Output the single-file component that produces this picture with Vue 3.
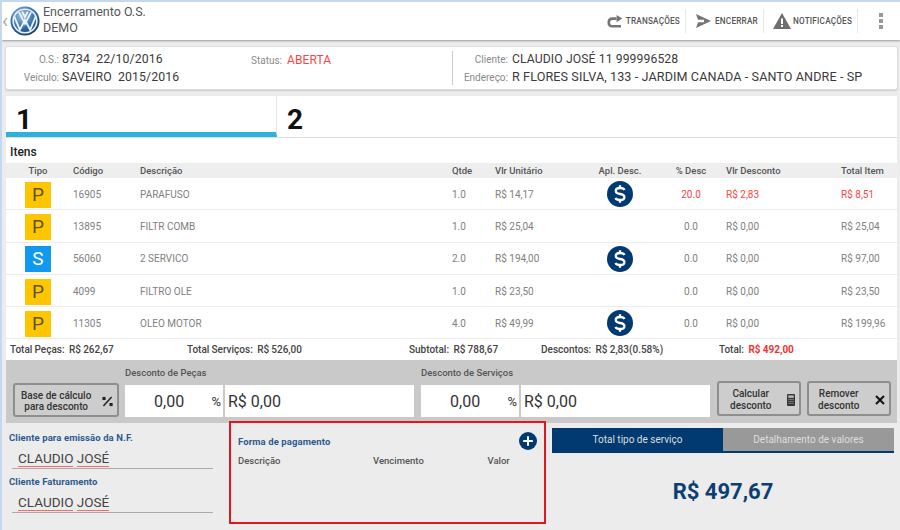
<script setup>
const cols = ['Tipo', 'Código', 'Descrição', 'Qtde', 'Vlr Unitário', 'Apl. Desc.', '% Desc', 'Vlr Desconto', 'Total Item']
const rows = [
  { t: 'P', c: '16905', d: 'PARAFUSO', q: '1.0', u: 'R$ 14,17', a: true, p: '20.0', v: 'R$ 2,83', total: 'R$ 8,51', red: true },
  { t: 'P', c: '13895', d: 'FILTR COMB', q: '1.0', u: 'R$ 25,04', a: false, p: '0.0', v: 'R$ 0,00', total: 'R$ 25,04' },
  { t: 'S', c: '56060', d: '2 SERVICO', q: '2.0', u: 'R$ 194,00', a: true, p: '0.0', v: 'R$ 0,00', total: 'R$ 97,00' },
  { t: 'P', c: '4099', d: 'FILTRO OLE', q: '1.0', u: 'R$ 23,50', a: false, p: '0.0', v: 'R$ 0,00', total: 'R$ 23,50' },
  { t: 'P', c: '11305', d: 'OLEO MOTOR', q: '4.0', u: 'R$ 49,99', a: true, p: '0.0', v: 'R$ 0,00', total: 'R$ 199,96' }
]
</script>

<template>
  <div class="page">
    <header class="topbar">
      <div class="brand">
        <span class="back">‹</span>
        <svg class="logo" viewBox="0 0 32 32" width="30" height="30">
          <defs>
            <radialGradient id="vwg" cx="40%" cy="30%" r="75%">
              <stop offset="0" stop-color="#9cc4e4" />
              <stop offset="0.6" stop-color="#2f6ca8" />
              <stop offset="1" stop-color="#123a66" />
            </radialGradient>
          </defs>
          <circle cx="16" cy="16" r="15.5" fill="url(#vwg)" />
          <circle cx="16" cy="16" r="12.6" fill="none" stroke="#e8eef4" stroke-width="1.7" />
          <path d="M9.5 6.5 L16 19 L22.5 6.5 M13 6 L16 12 L19 6 M4.5 11 L10.5 25.5 L16 15 L21.5 25.5 L27.5 11" fill="none" stroke="#eef3f8" stroke-width="2" />
        </svg>
        <div class="title">
          <div>Encerramento O.S.</div>
          <div>DEMO</div>
        </div>
      </div>
      <nav class="actions">
        <div class="action a1">
          <svg viewBox="0 0 18 15" width="18" height="15"><path d="M11 4.2 H6.5 Q2 4.2 2 8.6 Q2 13 6.5 13 H16" fill="none" stroke="#757575" stroke-width="3" /><path d="M11 0 L17.5 4.2 L11 8.4 Z" fill="#757575" /></svg>
          <span>TRANSAÇÕES</span>
        </div>
        <div class="action a2">
          <svg viewBox="0 0 15 14" width="15" height="14"><path d="M0 0 L15 7 L0 14 L2 8.2 H8 V5.8 H2 Z" fill="#757575" /></svg>
          <span>ENCERRAR</span>
        </div>
        <div class="action a3">
          <svg viewBox="0 0 18 16" width="18" height="16"><path d="M9 0 L18 16 H0 Z" fill="#6e6e6e" /><rect x="8" y="5.5" width="2" height="5.5" fill="#fff" /><rect x="8" y="12" width="2" height="2" fill="#fff" /></svg>
          <span>NOTIFICAÇÕES</span>
        </div>
        <div class="dots"><i></i><i></i><i></i></div>
      </nav>
    </header>

    <section class="info">
      <div class="info-col c1">
        <div class="line"><label>O.S.:</label><span>8734&nbsp; 22/10/2016</span></div>
        <div class="line"><label>Veículo:</label><span>SAVEIRO&nbsp; 2015/2016</span></div>
      </div>
      <div class="info-col c2">
        <div class="line"><label>Status:</label><span class="red">ABERTA</span></div>
      </div>
      <div class="info-col c3">
        <div class="line client"><label>Cliente:</label><span>CLAUDIO JOSÉ 11 999996528</span></div>
        <div class="line"><label>Endereço:</label><span>R FLORES SILVA, 133 - JARDIM CANADA - SANTO ANDRE - SP</span></div>
      </div>
    </section>

    <main class="panel">
      <div class="tabs">
        <div class="tab active">1</div>
        <div class="tab">2</div>
      </div>
      <h2>Itens</h2>
      <div class="grid head">
        <div v-for="(c, i) in cols" :key="c" :class="'col' + i">{{ c }}</div>
      </div>
      <div v-for="r in rows" :key="r.c" class="grid row" :class="{ red: r.red }">
        <div class="col0"><span class="badge" :class="r.t === 'S' ? 'svc' : 'part'">{{ r.t }}</span></div>
        <div class="col1">{{ r.c }}</div>
        <div class="col2">{{ r.d }}</div>
        <div class="col3">{{ r.q }}</div>
        <div class="col4">{{ r.u }}</div>
        <div class="col5">
          <svg v-if="r.a" viewBox="0 0 26 26" width="26" height="26">
            <circle cx="13" cy="13" r="13" fill="#003a70" />
            <path d="M17.5 9 Q16.5 7 13 7 Q8.8 7 8.8 10 Q8.8 12.4 13 13 Q17.4 13.7 17.4 16.2 Q17.4 19 13 19 Q9.5 19 8.4 17" fill="none" stroke="#fff" stroke-width="2.3" />
            <path d="M13 4.2 V21.8" stroke="#fff" stroke-width="2.3" stroke-dasharray="3 12 3" />
          </svg>
        </div>
        <div class="col6">{{ r.p }}</div>
        <div class="col7">{{ r.v }}</div>
        <div class="col8">{{ r.total }}</div>
      </div>
      <div class="totals">
        <div class="t1">Total Peças:&nbsp; R$ 262,67</div>
        <div class="t2">Total Serviços:&nbsp; R$ 526,00</div>
        <div class="t3">Subtotal:&nbsp; R$ 788,67</div>
        <div class="t4">Descontos:&nbsp; R$ 2,83(0.58%)</div>
        <div class="t5">Total:&nbsp; <b>R$ 492,00</b></div>
      </div>
    </main>

    <section class="discount">
      <button class="btn base">
        <span>Base de cálculo<br />para desconto</span>
        <svg viewBox="0 0 12 12" width="11" height="11"><path d="M10.5 1 L1.5 11" stroke="#222" stroke-width="1.6" /><rect x="0.5" y="1" width="3.4" height="3.4" fill="#222" /><rect x="8.2" y="7.6" width="3.4" height="3.4" fill="#222" /></svg>
      </button>
      <div class="dgroup">
        <div class="dlabel">Desconto de Peças</div>
        <div class="fields">
          <div class="pct"><span class="num">0,00</span><span class="sym">%</span></div>
          <div class="money">R$ 0,00</div>
        </div>
      </div>
      <div class="dgroup">
        <div class="dlabel">Desconto de Serviços</div>
        <div class="fields">
          <div class="pct"><span class="num">0,00</span><span class="sym">%</span></div>
          <div class="money">R$ 0,00</div>
        </div>
      </div>
      <button class="btn calc">
        <span>Calcular<br />desconto</span>
        <svg viewBox="0 0 8 12" width="8" height="12"><rect width="8" height="12" rx="1" fill="#333" /><rect x="1.2" y="1.4" width="5.6" height="2.4" fill="#bbb" /><path d="M1.2 5.4h5.6M1.2 7.4h5.6M1.2 9.4h5.6" stroke="#999" stroke-width=".7" /></svg>
      </button>
      <button class="btn remove">
        <span>Remover<br />desconto</span>
        <svg viewBox="0 0 10 10" width="10" height="10"><path d="M1 1 L9 9 M9 1 L1 9" stroke="#111" stroke-width="2" /></svg>
      </button>
    </section>

    <section class="bottom">
      <div class="clients">
        <div class="blue">Cliente para emissão da N.F.</div>
        <div class="field"><u>CLAUDIO</u> <u>JOSÉ</u></div>
        <div class="blue second">Cliente Faturamento</div>
        <div class="field"><u>CLAUDIO</u> <u>JOSÉ</u></div>
      </div>
      <div class="payment">
        <div class="pay-head">
          <span class="blue">Forma de pagamento</span>
          <svg viewBox="0 0 18 18" width="18" height="18"><circle cx="9" cy="9" r="9" fill="#003a70" /><path d="M9 4.2 V13.8 M4.2 9 H13.8" stroke="#fff" stroke-width="2" /></svg>
        </div>
        <div class="pay-cols">
          <span class="p1">Descrição</span><span class="p2">Vencimento</span><span>Valor</span>
        </div>
      </div>
      <div class="summary">
        <div class="sum-tabs">
          <div class="st on">Total tipo de serviço</div>
          <div class="st">Detalhamento de valores</div>
        </div>
        <div class="amount">R$ 497,67</div>
      </div>
    </section>
  </div>
</template>

<style>
html, body { margin: 0; background: #ececec; }
</style>

<style scoped>
.page {
  width: 900px;
  height: 530px;
  overflow: hidden;
  box-sizing: border-box;
  background: #ececec;
  border-top: 2px solid #c4d9ef;
  border-left: 2px solid #c4d9ef;
  font-family: Roboto, "Liberation Sans", sans-serif;
  color: #333;
}
.topbar {
  height: 38px;
  background: #fff;
  margin-bottom: 6px;
  box-shadow: 0 1px 2px #999;
  display: flex;
  justify-content: space-between;
  align-items: center;
}
.brand { display: flex; align-items: center; }
.back { color: #a8a8a8; font-size: 20px; width: 8px; margin-top: -1px; }
.logo { margin-right: 3px; }
.title { font-size: 12.5px; line-height: 16px; color: #555; margin-top: -2px; }
.actions { display: flex; align-items: center; height: 26px; }
.action {
  display: flex;
  align-items: center;
  height: 24px;
  gap: 3px;
  font-size: 8.2px;
  letter-spacing: .2px;
  color: #555;
  font-weight: 500;
  border-right: 1px solid #e6e6e6;
  box-sizing: border-box;
}
.a1 { width: 79px; padding-right: 5px; }
.a2 { width: 78px; padding-left: 10px; gap: 4px; }
.a3 { width: 94px; padding-left: 9px; gap: 2px; }
.dots { width: 42px; padding-left: 4px; box-sizing: border-box; display: flex; flex-direction: column; align-items: center; gap: 2px; }
.dots i { width: 4px; height: 4px; background: #999; display: block; }
.info {
  height: 44px;
  width: 893px;
  margin-left: 3px;
  box-sizing: border-box;
  background: #fff;
  border: 1px solid #ddd;
  border-radius: 3px;
  display: flex;
  align-items: center;
  box-shadow: 0 1px 1px #ccc;
}
.info-col { display: flex; flex-direction: column; gap: 1px; line-height: 16px; padding-top: 1px; }
.line { display: flex; align-items: baseline; white-space: nowrap; }
.line label { font-size: 10px; color: #8a8a8a; text-align: right; margin-right: 3px; }
.line span { color: #3a3a3a; letter-spacing: .1px; }
.c1 { width: 200px; font-size: 12.3px; }
.c1 label { width: 53px; }
.c2 { width: 246px; align-self: flex-start; padding-top: 5px; font-size: 12px; }
.c2 label { width: 76px; margin-right: 5px; }
.line span.red { color: #f44; }
.c3 { border-left: 1px solid #ccc; height: 33px; width: 440px; justify-content: center; font-size: 12.6px; }
.c3 label { width: 55px; margin-right: 4px; }
.c3 .client { font-size: 12.2px; }
.panel {
  width: 891px;
  margin: 6px 0 0 4px;
  height: 264px;
  background: #fff;
}
.tabs { display: flex; height: 41px; border-bottom: 1px solid #ddd; box-sizing: content-box; }
.tab { width: 271px; box-sizing: border-box; font-size: 28px; font-weight: 700; color: #111; padding: 8px 0 0 10px; line-height: 32px; }
.tab.active { height: 41px; border-bottom: 5px solid #2db2e0; border-right: 1px solid #e5e5e5; }
h2 { margin: 7px 0 0 4px; height: 18px; font-size: 12px; line-height: 14px; font-weight: 500; color: #222; }
.grid {
  display: grid;
  grid-template-columns: 67px 67px 312px 43px 95px 60px 76px 115px 56px;
  align-items: center;
  font-size: 9.5px;
  white-space: nowrap;
}
.head { height: 15px; background: #eeeeee; color: #555; font-weight: 500; padding-bottom: 1px; box-sizing: border-box; }
.row { height: 32.3px; box-sizing: border-box; border-bottom: 1.5px solid #ececec; color: #808080; font-size: 10px; padding-top: 1px; }
.col0 { padding-right: 3px; text-align: center; }
.col5 { display: flex; justify-content: center; }
.col6 { text-align: center; padding-left: 6px; }
.row.red .col6, .row.red .col7, .row.red .col8 { color: #f44; }
.badge {
  display: inline-block;
  width: 26px;
  height: 26px;
  line-height: 26px;
  text-align: center;
  font-size: 19px;
  margin-top: 1px;
}
.part { background: #fdc600; color: #5f5320; }
.svc { background: #1199f0; color: #fff; }
.totals { display: flex; height: 20.5px; align-items: center; font-size: 10px; font-weight: 500; color: #444; padding-left: 4px; white-space: nowrap; word-spacing: -.3px; }
.t1 { width: 177px; }
.t2 { width: 222px; }
.t3 { width: 132px; }
.t4 { width: 178px; }
.t5 b { color: #e33; font-weight: 700; }
.discount {
  width: 891px;
  margin-left: 4px;
  height: 63px;
  background: #c9c9c9;
  display: flex;
  box-sizing: border-box;
  align-items: flex-end;
  padding: 0 6px 6px 7px;
}
.btn {
  flex: none;
  font-family: inherit;
  display: flex;
  align-items: center;
  justify-content: space-between;
  background: #cdcdcd;
  border: 2px solid #8e8e8e;
  border-radius: 3px;
  color: #333;
  font-size: 10px;
  font-weight: 500;
  line-height: 11.5px;
  text-align: center;
  padding: 2px 4px 0 6px;
  box-sizing: border-box;
  height: 34px;
}
.base { width: 106px; margin-right: 6px; }
.calc { width: 84px; margin: 0 0 1px 0; height: 35px; }
.calc span { margin-left: 5px; }
.remove { width: 84px; margin: 0 0 1px 6px; height: 35px; }
.remove span { margin-left: 3px; }
.dgroup { width: 296px; flex: none; }
.dlabel { font-size: 9.5px; font-weight: 500; color: #555; margin-bottom: 7px; line-height: 11px; }
.fields { display: flex; gap: 2px; height: 32px; width: 289px; font-size: 16px; color: #333; }
.pct { width: 98px; background: #fff; display: flex; align-items: center; justify-content: space-between; padding: 1px 2px 0 29px; box-sizing: border-box; }
.sym { font-size: 13px; }
.money { flex: 1; background: #fff; display: flex; align-items: center; padding: 1px 0 0 3px; }
.bottom { display: flex; height: 107px; }
.clients { width: 225px; padding: 9px 0 0 7px; box-sizing: border-box; }
.blue { font-size: 9.5px; font-weight: 700; color: #2c5a8f; line-height: 11px; letter-spacing: .1px; }
.second { margin-top: 7px; }
.field {
  width: 201px;
  margin: 3px 0 0 3px;
  height: 23px;
  box-sizing: border-box;
  padding: 5px 0 0 6px;
  font-size: 13.5px;
  line-height: 15px;
  color: #444;
  border-bottom: 1px solid #aaa;
}
.field u { text-decoration: none; border-bottom: 1px solid #f66; }
.payment {
  width: 317px;
  height: 103px;
  margin: -2px 0 0 2px;
  box-sizing: border-box;
  border: 2px solid #e5151f;
  padding: 8px 7px 0 7px;
}
.pay-head { display: flex; justify-content: space-between; align-items: center; height: 20px; }
.pay-cols { display: flex; font-size: 9.5px; font-weight: 500; color: #555; margin-top: 4px; }
.p1 { width: 135px; }
.p2 { width: 114.5px; }
.summary { width: 342px; margin-left: 6px; padding-top: 5px; }
.sum-tabs { display: flex; width: 342px; height: 25px; box-sizing: border-box; border-bottom: 2px solid #003a70; }
.st { flex: 1; background: #999; color: #ddd; font-size: 10px; display: flex; align-items: center; justify-content: center; }
.st.on { background: #003a70; color: #ddd; }
.amount { text-align: center; font-size: 22px; font-weight: 700; color: #0b3f73; margin-top: 26px; line-height: 26px; }
</style>
